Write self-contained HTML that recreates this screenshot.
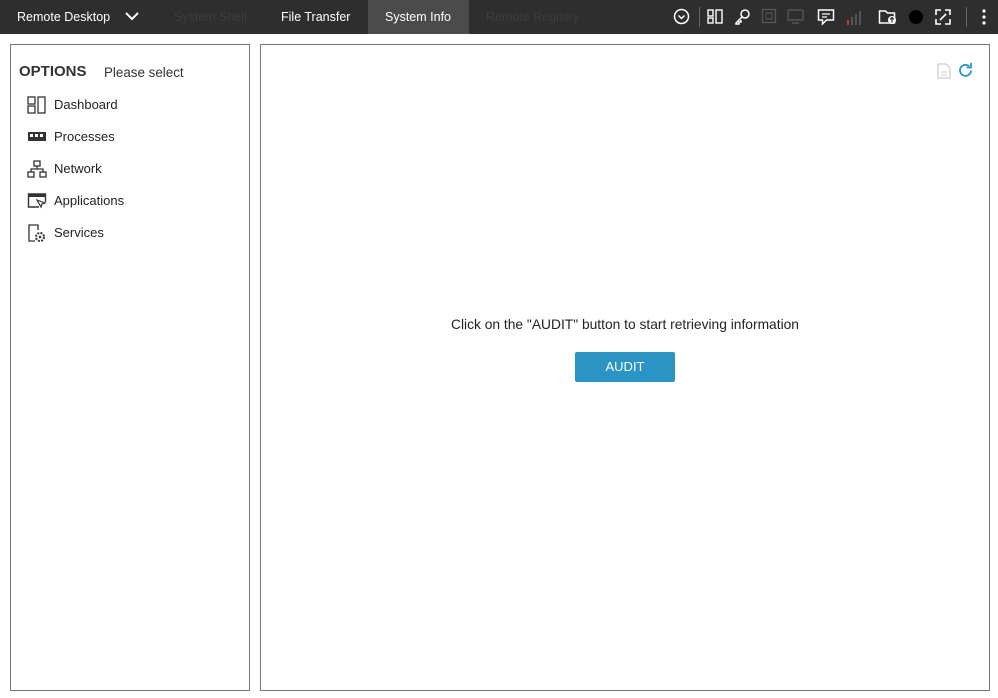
<!DOCTYPE html>
<html><head><meta charset="utf-8"><style>
*{margin:0;padding:0;box-sizing:border-box}
body{width:998px;height:698px;background:#fff;font-family:"Liberation Sans",sans-serif;position:relative;overflow:hidden;color:#222}
.top{position:absolute;left:0;top:0;width:998px;height:34px;background:#2e2e2e}
.t{position:absolute;top:0;height:34px;line-height:34px;font-size:12.5px;color:#fff}
.pan{position:absolute;border:1px solid #777;background:#fff}
.item{position:absolute;left:16px;font-size:13px;color:#222}
.item svg{position:absolute;left:0;top:-1px}
.item span{position:absolute;left:27px;top:0;white-space:nowrap}
.ic{position:absolute;top:8px}
</style></head><body>
<div class="top">
<div class="t" style="left:17px">Remote Desktop</div>
<svg class="ic" style="left:124px;top:11px" width="16" height="12"><path d="M2 2l6 6 6-6" stroke="#fff" stroke-width="2" fill="none"/></svg>
<div class="t" style="left:174px;color:#3e3e3e">System Shell</div>
<div class="t" style="left:281px">File Transfer</div>
<div style="position:absolute;left:368px;top:0;width:101px;height:34px;background:#4b4b4b"></div>
<div class="t" style="left:385px">System Info</div>
<div class="t" style="left:486px;color:#3e3e3e">Remote Registry</div>
<svg class="ic" style="left:673px" width="17" height="17"><circle cx="8.5" cy="8.5" r="7" stroke="#fff" stroke-width="1.5" fill="none"/><path d="M5.5 7.5l3 3 3-3" stroke="#fff" stroke-width="1.5" fill="none"/></svg>
<div style="position:absolute;left:699px;top:7px;width:1px;height:20px;background:#666"></div>
<svg class="ic" style="left:707px" width="16" height="17"><rect x="1" y="2" width="5" height="6" stroke="#fff" fill="none" stroke-width="1.4"/><rect x="1" y="10" width="5" height="5" stroke="#fff" fill="none" stroke-width="1.4"/><rect x="9" y="2" width="6" height="13" stroke="#fff" fill="none" stroke-width="1.4"/></svg>
<svg class="ic" style="left:734px" width="17" height="17"><circle cx="11" cy="6" r="4" stroke="#fff" fill="none" stroke-width="1.5"/><path d="M8 9l-6 6v1h3v-2h2v-2" stroke="#fff" fill="none" stroke-width="1.5"/></svg>
<svg class="ic" style="left:761px" width="16" height="17"><rect x="1.5" y="1.5" width="13" height="13" stroke="#555" fill="none" stroke-width="1.3"/><rect x="5" y="5" width="6" height="6" stroke="#555" fill="none"/></svg>
<svg class="ic" style="left:787px" width="17" height="17"><rect x="1" y="2" width="15" height="10" rx="1" stroke="#555" fill="none" stroke-width="1.4"/><path d="M5 15h7" stroke="#555" stroke-width="1.4"/></svg>
<svg class="ic" style="left:817px" width="18" height="18"><path d="M1.5 2h15v10h-7l-4 4v-4h-4z" stroke="#fff" fill="none" stroke-width="1.5"/><path d="M5 6h8M5 9h5" stroke="#fff" stroke-width="1.2"/></svg>
<svg class="ic" style="left:845px" width="22" height="18"><rect x="2" y="12" width="2" height="5" fill="#c33"/><rect x="6" y="9" width="2" height="8" fill="#555"/><rect x="10" y="6" width="2" height="11" fill="#555"/><rect x="14" y="3" width="2" height="14" fill="#555"/></svg>
<svg class="ic" style="left:878px" width="20" height="18"><path d="M1.5 3h6l2 2h7v10h-15z" stroke="#fff" fill="none" stroke-width="1.5"/><circle cx="14" cy="12" r="4" fill="#fff"/><path d="M14 14.5v-5M12 11.5l2-2 2 2" stroke="#2e2e2e" stroke-width="1.2" fill="none"/></svg>
<div style="position:absolute;left:909px;top:10px;width:14px;height:14px;border-radius:50%;background:#000"></div>
<svg class="ic" style="left:934px" width="18" height="18"><path d="M2 7V2h5M16 11v5h-5M11 2h5v5M7 16H2v-5M6 12l6-6" stroke="#fff" fill="none" stroke-width="1.6"/></svg>
<div style="position:absolute;left:966px;top:7px;width:1px;height:20px;background:#666"></div>
<svg class="ic" style="left:981px" width="6" height="18"><circle cx="3" cy="3" r="1.6" fill="#fff"/><circle cx="3" cy="9" r="1.6" fill="#fff"/><circle cx="3" cy="15" r="1.6" fill="#fff"/></svg>
</div>
<div class="pan" style="left:10px;top:44px;width:240px;height:647px">
<div style="position:absolute;left:8px;top:18px;font-size:15px;font-weight:bold;color:#333">OPTIONS</div>
<div style="position:absolute;left:93px;top:20px;font-size:13.4px;color:#333">Please select</div>
<div class="item" style="top:52px"><svg width="20" height="18"><rect x="1" y="1" width="7" height="7" stroke="#333" fill="none" stroke-width="1.3"/><rect x="1" y="10" width="7" height="7" stroke="#333" fill="none" stroke-width="1.3"/><rect x="11" y="1" width="7" height="16" stroke="#333" fill="none" stroke-width="1.3"/></svg><span>Dashboard</span></div>
<div class="item" style="top:84px"><svg width="20" height="18"><rect x="1" y="4" width="18" height="9" fill="#333"/><rect x="3" y="6" width="3" height="3" fill="#fff"/><rect x="8" y="6" width="3" height="3" fill="#fff"/><rect x="13" y="6" width="3" height="3" fill="#fff"/></svg><span>Processes</span></div>
<div class="item" style="top:116px"><svg width="20" height="18"><rect x="7" y="1" width="6" height="5" stroke="#333" fill="none" stroke-width="1.3"/><rect x="1" y="12" width="6" height="5" stroke="#333" fill="none" stroke-width="1.3"/><rect x="13" y="12" width="6" height="5" stroke="#333" fill="none" stroke-width="1.3"/><path d="M10 6v3M4 12V9h12v3" stroke="#333" fill="none" stroke-width="1.3"/></svg><span>Network</span></div>
<div class="item" style="top:148px"><svg width="20" height="18"><path d="M12 15H1.5V2h17v8" stroke="#333" fill="none" stroke-width="1.4"/><rect x="1.5" y="2" width="17" height="3" fill="#333"/><path d="M10 8l8 3-3 1-1 3z" stroke="#333" fill="none" stroke-width="1.2"/></svg><span>Applications</span></div>
<div class="item" style="top:180px"><svg width="20" height="20"><path d="M8 17H2V1h9v5" stroke="#333" fill="none" stroke-width="1.3"/><circle cx="13" cy="13" r="4" stroke="#333" fill="none" stroke-width="2" stroke-dasharray="2 1.2"/><circle cx="13" cy="13" r="1.3" fill="#333"/></svg><span>Services</span></div>
</div>
<div class="pan" style="left:260px;top:44px;width:730px;height:647px">
<svg style="position:absolute;left:676px;top:18px" width="14" height="16"><path d="M1 1h8l4 4v10H1z" stroke="#ccc" fill="none" stroke-width="1.2"/><path d="M4 9h6M4 12h6" stroke="#ccc"/></svg>
<svg style="position:absolute;left:696px;top:17px" width="17" height="17"><path d="M14 8.5a5.5 5.5 0 1 1-1.8-4.2" stroke="#2a95c5" fill="none" stroke-width="1.8"/><path d="M14 1v4.5h-4.5" stroke="#2a95c5" fill="none" stroke-width="1.8"/></svg>
<div style="position:absolute;left:0;width:728px;top:272px;text-align:center;font-size:13.8px;color:#222">Click on the "AUDIT" button to start retrieving information</div>
<div style="position:absolute;left:314px;top:307px;width:100px;height:30px;background:#2a95c5;border-radius:2px;color:#fff;font-size:13px;text-align:center;line-height:30px">AUDIT</div>
</div>
</body></html>
